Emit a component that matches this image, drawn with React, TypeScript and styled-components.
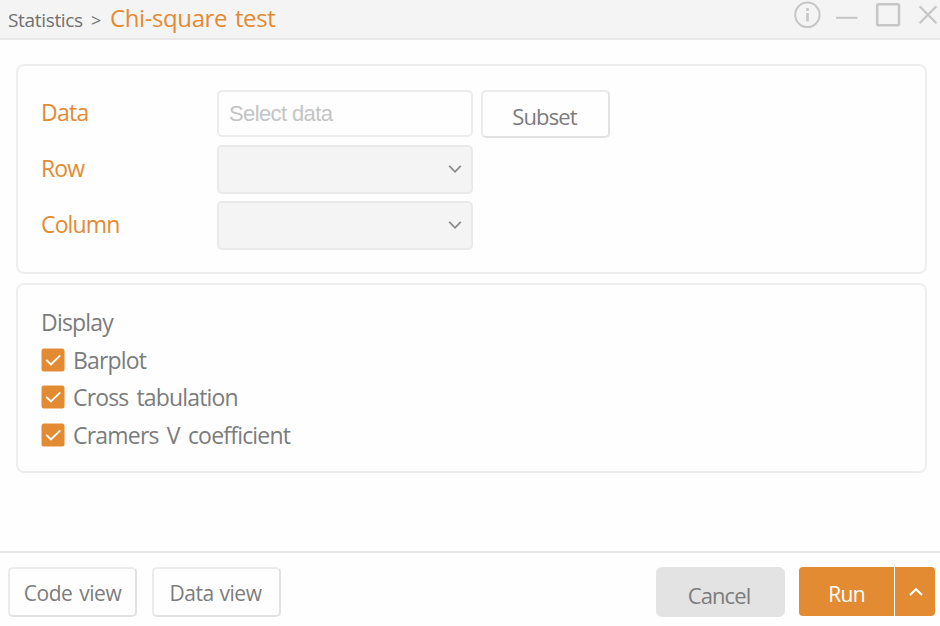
import React from "react";
import styled, { createGlobalStyle } from "styled-components";

const ORANGE = "#e38b33";
const GREY = "#7c7c7c";
const LINE = "#e8e8e8";

const GlobalStyle = createGlobalStyle`
  * { box-sizing: border-box; }
  body { margin: 0; background: #fefefe; font-family: "Open Sans", "Noto Sans", sans-serif; }
  button, input { font-family: inherit; }
`;

const Window = styled.div`
  width: 940px;
  height: 626px;
  display: flex;
  flex-direction: column;
  overflow: hidden;
  background: #fefefe;
  color: ${GREY};
`;

const TitleBar = styled.header`
  height: 40px;
  flex: none;
  display: flex;
  align-items: flex-start;
  justify-content: space-between;
  background: #f4f4f4;
  border-bottom: 2px solid #e8e8e8;
`;

const Breadcrumb = styled.div`
  display: flex;
  padding-left: 8px;
`;

const Text = styled.span<{ $size?: number; $track?: number; $word?: number }>`
  display: block;
  white-space: nowrap;
  font-size: ${(p) => p.$size ?? 23}px;
  letter-spacing: ${(p) => p.$track ?? 0}px;
  word-spacing: ${(p) => p.$word ?? 0}px;
`;

const Crumb = styled(Text)`
  width: 83px;
  line-height: 40px;
  color: #707070;
`;

const Separator = styled(Crumb)`
  width: 19px;
`;

const Title = styled(Text)`
  line-height: 36px;
  color: ${ORANGE};
`;

const WindowIcons = styled.svg`
  width: 160px;
  height: 38px;
  fill: none;
  stroke: #c6c6c6;
  stroke-width: 2;
`;

const Content = styled.main`
  flex: 1;
  display: flex;
  flex-direction: column;
  gap: 9px;
  padding: 24px 13px 0 16px;
`;

const Card = styled.section<{ $height: number }>`
  height: ${(p) => p.$height}px;
  border: 2px solid #eeeeee;
  border-radius: 8px;
  padding: 24px 0 0 23px;
`;

const FieldRow = styled.div`
  display: flex;
  height: 49px;
  margin-bottom: 7px;
`;

const DataRow = styled(FieldRow)`
  margin-bottom: 6px;
`;

const Label = styled.div<{ $line?: number }>`
  width: 176px;
  color: ${ORANGE};
  line-height: ${(p) => p.$line ?? 47}px;
`;

const DataInput = styled.div`
  width: 256px;
  height: 47px;
  border: 2px solid #ececec;
  border-radius: 5px;
  padding-left: 10px;
  line-height: 43px;
  color: #c4c4c4;
  font-family: "Liberation Sans", Arial, sans-serif;
`;

const Select = styled.div`
  width: 256px;
  height: 49px;
  display: flex;
  align-items: center;
  justify-content: flex-end;
  padding-right: 8px;
  background: #f4f4f4;
  border: 2px solid #e9e9e9;
  border-radius: 5px;
`;

const Button = styled.button`
  width: 129px;
  height: 50px;
  padding: 2px 0 0;
  display: flex;
  align-items: center;
  justify-content: center;
  color: ${GREY};
  background: #fefefe;
  border: 2px solid;
  border-color: #ebebeb #e2e2e2 #e2e2e2 #ebebeb;
  border-radius: 5px;
`;

const SubsetButton = styled(Button)`
  height: 48px;
  margin-left: 8px;
  padding: 4px 2px 0 0;
`;

const CancelButton = styled(Button)`
  margin-left: auto;
  padding: 5px 3px 0 0;
  background: #e3e3e3;
  border-color: #e3e3e3;
  border-radius: 6px;
`;

const RunGroup = styled.div`
  display: flex;
  gap: 1px;
  margin-left: 14px;
`;

const RunButton = styled.button`
  width: 95px;
  height: 49px;
  padding: 5px 0 0;
  display: flex;
  align-items: center;
  justify-content: center;
  color: #fff;
  font-weight: 500;
  background: ${ORANGE};
  border: 0;
  border-radius: 4px 0 0 4px;
`;

const RunMenuButton = styled(RunButton)`
  width: 40px;
  padding: 1px 0 0 1px;
  border-radius: 0 4px 4px 0;
`;

const Heading = styled.div`
  height: 36px;
  margin-top: -4px;
  line-height: 35px;
`;

const CheckRow = styled.div`
  display: flex;
  align-items: center;
  height: 37.6px;
  gap: 8px;
`;

const CheckIcon = styled.svg`
  width: 24px;
  height: 24px;
  flex: none;
`;

const Footer = styled.footer`
  height: 75px;
  flex: none;
  display: flex;
  align-items: flex-start;
  padding: 14px 5px 0 8px;
  border-top: 2px solid ${LINE};
`;

const DataViewButton = styled(Button)`
  margin-left: 15px;
  padding-right: 2px;
`;

function Chevron({ up = false }: { up?: boolean }) {
  return (
    <svg width="16" height="12" viewBox="0 0 16 12" fill="none">
      <path
        d={up ? "M2 9 L8 3.2 L14 9" : "M2.2 1.8 L8 7.8 L13.8 1.8"}
        stroke={up ? "#fff" : "#8b8b8b"}
        strokeWidth={up ? 2.2 : 1.8}
      />
    </svg>
  );
}

const options = [
  { name: "Barplot", track: -0.85, word: 0 },
  { name: "Cross tabulation", track: -0.85, word: 3 },
  { name: "Cramers V coefficient", track: -0.8, word: 3 },
];

export default function App() {
  return (
    <Window>
      <GlobalStyle />
      <TitleBar>
        <Breadcrumb>
          <Crumb $size={19} $track={-0.33}>Statistics</Crumb>
          <Separator $size={18}>&gt;</Separator>
          <Title $size={24} $track={-0.4} $word={2}>Chi-square test</Title>
        </Breadcrumb>
        <WindowIcons viewBox="0 0 160 38">
          <circle cx="27.4" cy="14.8" r="12.2" />
          <path d="M27.5 13v8.5M27.5 8v3" strokeWidth="2.6" />
          <path d="M56 17.8h21.5" />
          <rect x="97.2" y="4.2" width="21.8" height="21" rx="1.5" strokeWidth="2.6" />
          <path d="M139.5 6.3l17 17M156.5 6.3l-17 17" strokeWidth="2.3" />
        </WindowIcons>
      </TitleBar>
      <Content>
        <Card $height={210}>
          <DataRow>
            <Label $line={45}><Text $track={-0.7}>Data</Text></Label>
            <DataInput><Text $size={22} $track={-0.62}>Select data</Text></DataInput>
            <SubsetButton><Text $size={22} $track={-0.9}>Subset</Text></SubsetButton>
          </DataRow>
          <FieldRow>
            <Label><Text $track={-0.9}>Row</Text></Label>
            <Select><Chevron /></Select>
          </FieldRow>
          <FieldRow>
            <Label><Text $track={-0.85}>Column</Text></Label>
            <Select><Chevron /></Select>
          </FieldRow>
        </Card>
        <Card $height={190}>
          <Heading><Text $track={-0.8}>Display</Text></Heading>
          {options.map((o) => (
            <CheckRow key={o.name}>
              <CheckIcon viewBox="0 0 24 24">
                <rect x="0.5" y="0.5" width="23" height="23" rx="2.5" fill={ORANGE} />
                <path d="M5.3 11.8l4.6 4.7L19.3 7.3" fill="none" stroke="#fff" strokeWidth="1.8" />
              </CheckIcon>
              <Text $track={o.track} $word={o.word}>{o.name}</Text>
            </CheckRow>
          ))}
        </Card>
      </Content>
      <Footer>
        <Button><Text $size={21} $track={-0.5} $word={2}>Code view</Text></Button>
        <DataViewButton><Text $size={21} $track={-0.5} $word={1}>Data view</Text></DataViewButton>
        <CancelButton><Text $size={22} $track={-0.9}>Cancel</Text></CancelButton>
        <RunGroup>
          <RunButton><Text $size={21} $track={-0.7}>Run</Text></RunButton>
          <RunMenuButton aria-label="Run options"><Chevron up /></RunMenuButton>
        </RunGroup>
      </Footer>
    </Window>
  );
}
